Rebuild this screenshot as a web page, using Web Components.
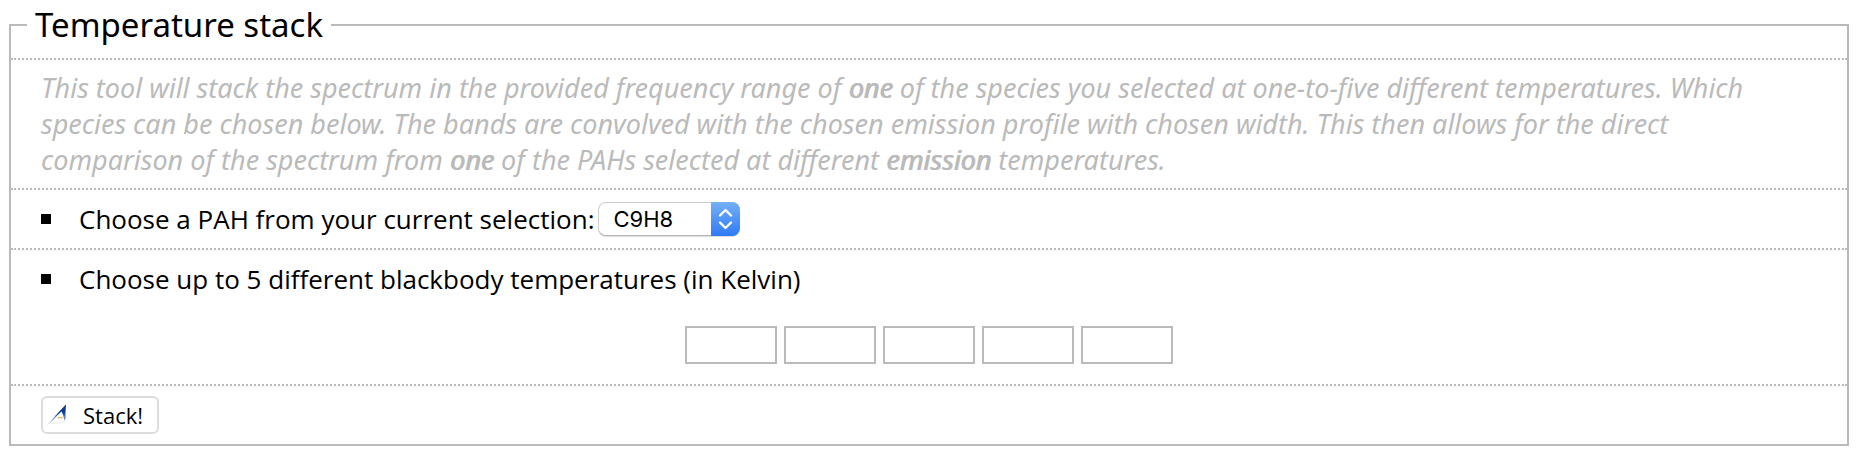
<!DOCTYPE html>
<html lang="en">
<head>
<meta charset="utf-8">
<title>Temperature stack</title>
<style>
body { margin: 0; padding: 4px 15px 11px 9px; background: #fff; color: #000; font: 26px/36px "Open Sans", "Noto Sans", sans-serif; }
</style>
</head>
<body>
<temperature-stack></temperature-stack>
<script>
class ToolPanel extends HTMLElement {
  constructor() {
    super();
    this.attachShadow({ mode: "open" }).innerHTML = `
      <style>
        :host { display: block; }
        fieldset { margin: 0; padding: 0; border: 2px solid #bababa; min-width: 0; }
        legend { margin-left: 16px; padding: 0 8px; font-family: "Noto Sans", sans-serif; font-size: 33px; line-height: 42px; }
        .body { padding-top: 12px; }
      </style>
      <fieldset><legend><slot name="title"></slot></legend><div class="body"><slot></slot></div></fieldset>`;
  }
}
class PanelRow extends HTMLElement {
  constructor() {
    super();
    this.attachShadow({ mode: "open" }).innerHTML = `
      <style>
        :host { display: block; border-top: 2px dotted #bababa; padding: 10px 30px; }
        .line { display: flex; align-items: center; min-height: 38px; }
        .line::before { content: ""; flex: none; width: 10px; height: 10px; margin-right: 28px; background: #000; display: none; }
        :host([bullet]) .line::before { display: block; }
        .text { flex: 1; }
      </style>
      <div class="line"><div class="text"><slot></slot></div></div><slot name="below"></slot>`;
  }
}
class SpeciesSelect extends HTMLElement {
  constructor() {
    super();
    this.attachShadow({ mode: "open" }).innerHTML = `
      <style>
        :host { display: flex; align-items: center; gap: 4px; }
        .box { display: grid; width: 142px; height: 34px; }
        select, svg { grid-area: 1 / 1; }
        select { appearance: none; box-sizing: border-box; width: 100%; height: 34px; margin: 0; padding: 0 36px 0 14px; border: 1px solid #cfcfcf; border-bottom-color: #b5b5b5; border-radius: 8px; background: #fff; color: #000; font: 22px/30px Inter, sans-serif; box-shadow: 0 1px 1px #dcdcdc; }
        svg { justify-self: end; pointer-events: none; z-index: 1; }
      </style>
      <label for="species"><slot></slot></label>
      <span class="box">
        <select id="species"><option>C9H8</option></select>
        <svg width="29" height="34" viewBox="0 0 29 34" aria-hidden="true">
          <defs><linearGradient id="g" x2="0" y2="1"><stop stop-color="#74b0f6"/><stop offset="1" stop-color="#2f7af5"/></linearGradient></defs>
          <path d="M0 0H21A8 8 0 0 1 29 8V26A8 8 0 0 1 21 34H0Z" fill="url(#g)"/>
          <path d="M9 13.5L14.5 8L20 13.5M9 20.5L14.5 26L20 20.5" fill="none" stroke="#fff" stroke-width="2.4" stroke-linecap="round" stroke-linejoin="round"/>
        </svg>
      </span>`;
  }
}
class TemperatureInputs extends HTMLElement {
  constructor() {
    super();
    this.attachShadow({ mode: "open" }).innerHTML = `
      <style>
        :host { display: flex; justify-content: center; gap: 7px; padding: 28px 0 10px; }
        input { box-sizing: border-box; width: 92px; height: 38px; margin: 0; padding: 0 6px; border: 2px solid #bababa; background: #fff; font: inherit; }
      </style>` + [1, 2, 3, 4, 5].map(n => `<input type="text" inputmode="numeric" aria-label="Temperature ${n} in Kelvin">`).join("");
  }
}
class StackButton extends HTMLElement {
  constructor() {
    super();
    this.attachShadow({ mode: "open" }).innerHTML = `
      <style>
        :host { display: flex; }
        button { display: flex; align-items: center; gap: 15px; box-sizing: border-box; height: 38px; margin: 0; padding: 0 14px 0 4px; border: 2px solid #dcdcdc; border-radius: 6px; background: #fff; color: #000; font-family: inherit; font-size: 22px; line-height: 30px; }
      </style>
      <button type="button">
        <svg width="21" height="24" viewBox="0 0 21 24" aria-hidden="true">
          <path d="M19 1.5L0 22.5L7 16L14.5 8.2Q16.5 13 17.5 17.5L18.6 15Z" fill="#5f83bd"/>
          <path d="M19 1.5L6.5 14.8L14.8 8.2L17.3 13Z" fill="#073a91"/>
          <path d="M4 20Q13 21 19 18" fill="none" stroke="#e8e8ee"/>
          <path d="M10.5 14.6H15.5" stroke="#e2bd62" stroke-width="1.5"/>
        </svg><slot></slot>
      </button>`;
  }
}
class TemperatureStack extends HTMLElement {
  constructor() {
    super();
    this.attachShadow({ mode: "open" }).innerHTML = `
      <style>
        :host { display: block; }
        p { margin: 0; padding-right: 30px; color: #bababa; font-family: "Noto Sans", sans-serif; font-size: 27px; font-style: italic; }
        b { font-weight: inherit; text-shadow: 1px 0 currentColor; }
      </style>
      <tool-panel>
        <span slot="title">Temperature stack</span>
        <panel-row><p>This tool will stack the spectrum in the provided frequency range of <b>one</b> of the species you selected at one-to-five different temperatures. Which species can be chosen below. The bands are convolved with the chosen emission profile with chosen width. This then allows for the direct comparison of the spectrum from <b>one</b> of the PAHs selected at different <b>emission</b> temperatures.</p></panel-row>
        <panel-row bullet><species-select>Choose a PAH from your current selection:</species-select></panel-row>
        <panel-row bullet>Choose up to 5 different blackbody temperatures (in Kelvin)<temperature-inputs slot="below"></temperature-inputs></panel-row>
        <panel-row><stack-button>Stack!</stack-button></panel-row>
      </tool-panel>`;
  }
}
customElements.define("tool-panel", ToolPanel);
customElements.define("panel-row", PanelRow);
customElements.define("species-select", SpeciesSelect);
customElements.define("temperature-inputs", TemperatureInputs);
customElements.define("stack-button", StackButton);
customElements.define("temperature-stack", TemperatureStack);
</script>
</body>
</html>
